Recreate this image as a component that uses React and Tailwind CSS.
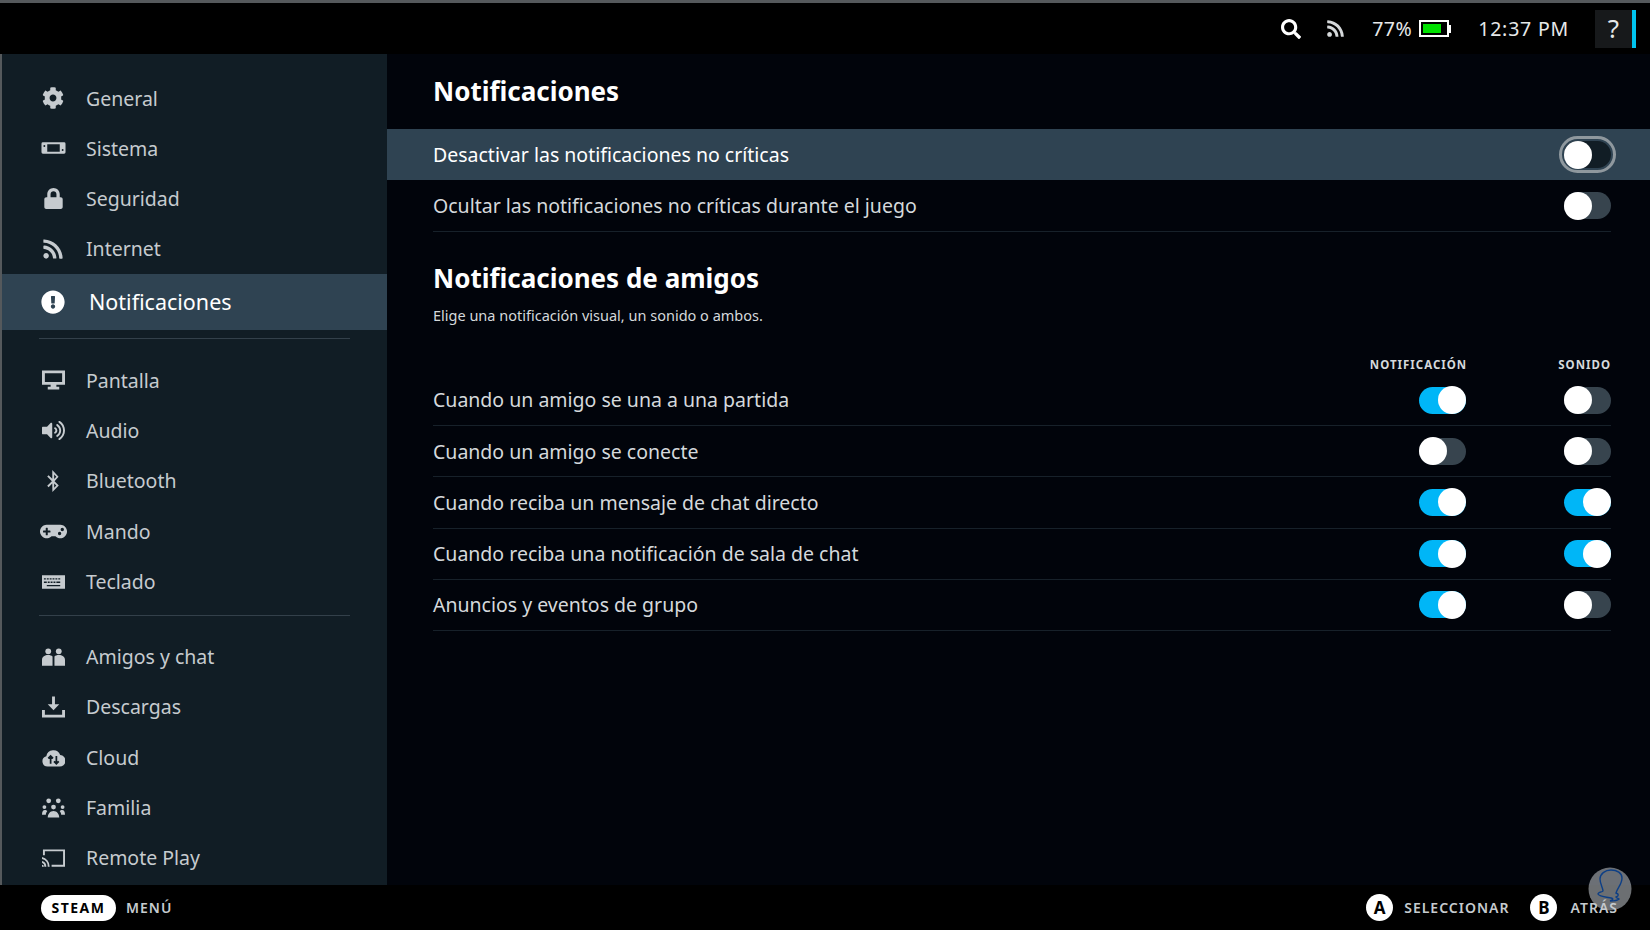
import React from 'react';
import { FaCog, FaLock, FaRss, FaExclamationCircle, FaVolumeUp, FaBluetoothB, FaGamepad, FaSearch } from 'react-icons/fa';

const DeckIcon = () => (
  <svg viewBox="0 0 26 14" className="w-[25px] h-[14px]" fill="currentColor">
    <path fillRule="evenodd" d="M2 1h22a1.500 1.500 0 0 1 1.500 1.500v9A1.500 1.500 0 0 1 24 13H2a1.500 1.500 0 0 1-1.500-1.500v-9A1.500 1.500 0 0 1 2 1zm4.500 2v8h13V3z" />
    <circle cx="3.500" cy="5" r="1" fill="#111d25" />
    <circle cx="22.500" cy="9" r="1" fill="#111d25" />
  </svg>
);

const MonitorIcon = () => (
  <svg viewBox="0 0 24 20" className="w-[23px] h-[20px]" fill="currentColor">
    <path fillRule="evenodd" d="M0 0h24v15H15v2h3v3H6v-3h3v-2H0zm3 3v9h18V3z" />
  </svg>
);

const KeyboardIcon = () => (
  <svg viewBox="0 0 24 14" className="w-[23px] h-[14px]" fill="currentColor">
    <path fillRule="evenodd" d="M0 0h24v14H0zM2 3v1.500h2V3zm3 0v1.500h2V3zm3 0v1.500h2V3zm3 0v1.500h2V3zm3 0v1.500h2V3zm3 0v1.500h2V3zm-15 3.500V8h3V6.500zm4 0V8h2V6.500zm3 0V8h2V6.500zm3 0V8h2V6.500zm3 0V8h4V6.500zM5 10v1.500h14V10z" />
  </svg>
);

const FriendsIcon = () => (
  <svg viewBox="0 0 24 20" className="w-[23px] h-[20px]" fill="currentColor">
    <circle cx="6.500" cy="4" r="3" />
    <circle cx="17.500" cy="4" r="3" />
    <path d="M0 19v-6c0-3 3-5 6.500-5 2 0 3.500.6 4.500 1.500V19zM13 19V9.500C14 8.600 15.500 8 17.500 8 21 8 24 10 24 13v6z" />
  </svg>
);

const DownloadIcon = () => (
  <svg viewBox="0 0 24 22" className="w-[23px] h-[22px]" fill="currentColor">
    <path d="M10.500 0h3v8H18l-6 6.500L6 8h4.500z" />
    <path d="M0 14h3v5h18v-5h3v8H0z" />
  </svg>
);

const CloudIcon = () => (
  <svg viewBox="0 0 24 20" className="w-[23px] h-[20px]">
    <path fill="currentColor" d="M6 20a5.500 5.500 0 0 1-1.500-10.800A7.500 7.500 0 0 1 19 8a6 6 0 0 1-1 12z" />
    <path fill="none" stroke="#111d25" strokeWidth="1.800" d="M9 17V9M6.500 11.500 9 9l2.500 2.500M15 9v8M12.500 14.500 15 17l2.500-2.500" />
  </svg>
);

const FamilyIcon = () => (
  <svg viewBox="0 0 24 20" className="w-[23px] h-[20px]" fill="currentColor">
    <circle cx="7" cy="2.500" r="2.500" />
    <circle cx="17" cy="2.500" r="2.500" />
    <circle cx="12" cy="9" r="2.500" />
    <circle cx="2.500" cy="9" r="2" />
    <circle cx="21.500" cy="9" r="2" />
    <path d="M6 20c0-4 2.500-7 6-7s6 3 6 7zM0 17c0-3 1-5 3-5 1 0 2 .4 2.500 1.200C4.700 14.400 4 15.700 4 17zM24 17c0-3-1-5-3-5-1 0-2 .4-2.500 1.200.8 1.200 1.500 2.500 1.500 3.800z" />
  </svg>
);

const CastIcon = () => (
  <svg viewBox="0 0 24 18" className="w-[23px] h-[18px]" fill="currentColor">
    <path d="M1 0h23v18H10v-2h12V2H3v4H1z" />
    <path d="M0 8a10 10 0 0 1 8 10H6a8 8 0 0 0-6-8zM0 12a6 6 0 0 1 4.500 6h-2A4 4 0 0 0 0 14zM0 16a2 2 0 0 1 2 2H0z" />
  </svg>
);

const groups = [
  [
    { label: 'General', icon: <FaCog size={22} /> },
    { label: 'Sistema', icon: <DeckIcon /> },
    { label: 'Seguridad', icon: <FaLock size={21} /> },
    { label: 'Internet', icon: <FaRss size={22} /> },
    { label: 'Notificaciones', icon: <FaExclamationCircle size={24} />, active: true },
  ],
  [
    { label: 'Pantalla', icon: <MonitorIcon /> },
    { label: 'Audio', icon: <FaVolumeUp size={23} /> },
    { label: 'Bluetooth', icon: <FaBluetoothB size={22} /> },
    { label: 'Mando', icon: <FaGamepad size={27} /> },
    { label: 'Teclado', icon: <KeyboardIcon /> },
  ],
  [
    { label: 'Amigos y chat', icon: <FriendsIcon /> },
    { label: 'Descargas', icon: <DownloadIcon /> },
    { label: 'Cloud', icon: <CloudIcon /> },
    { label: 'Familia', icon: <FamilyIcon /> },
    { label: 'Remote Play', icon: <CastIcon /> },
  ],
];

const friendRows = [
  { label: 'Cuando un amigo se una a una partida', notif: true, sound: false },
  { label: 'Cuando un amigo se conecte', notif: false, sound: false },
  { label: 'Cuando reciba un mensaje de chat directo', notif: true, sound: true },
  { label: 'Cuando reciba una notificación de sala de chat', notif: true, sound: true },
  { label: 'Anuncios y eventos de grupo', notif: true, sound: false },
];

const Toggle = ({ on, focused }) => (
  <div
    className={`relative w-[47px] h-[27px] rounded-full ${on ? 'bg-[#00b6f7]' : focused ? 'bg-[#111d25]' : 'bg-[#37444e]'} ${
      focused ? 'outline-[3px] outline-offset-[2px] outline-[#8f989e]' : ''
    }`}
  >
    <div className={`absolute top-[-0.500px] w-[28px] h-[28px] rounded-full bg-white ${on ? 'right-0' : 'left-0'}`} />
  </div>
);

const SidebarItem = ({ item }) => (
  <div
    className={`flex items-center ${
      item.active ? 'h-[56px] bg-[#2f4352] text-white text-[21.500px]' : 'h-[50.300px] text-[#c6cbcf] text-[19.500px]'
    }`}
  >
    <div className="w-[32px] ml-[35px] flex justify-center shrink-0">{item.icon}</div>
    <span className={item.active ? 'ml-[20px]' : 'ml-[17px]'}>{item.label}</span>
  </div>
);

export default function App() {
  return (
    <div className="w-[1650px] h-[930px] flex flex-col bg-black overflow-hidden relative text-white font-['Noto_Sans',sans-serif]">
      <div className="h-[3px] bg-[#55595c]" />
      {/* top bar */}
      <div className="h-[51px] flex items-center justify-end text-[#e6e8e9]">
        <FaSearch size={20} className="text-white" />
        <FaRss size={19} className="ml-[25px] text-[#d5d8da]" />
        <span className="ml-[27px] text-[19.500px] tracking-[0.500px]">77%</span>
        <div className="ml-[7px] flex items-center">
          <div className="w-[30px] h-[17px] border-2 border-white p-[2px]">
            <div className="w-[18px] h-full bg-[#00e000]" />
          </div>
          <div className="w-[2px] h-[8px] bg-white" />
        </div>
        <span className="ml-[27px] text-[19.500px] tracking-[0.800px]">12:37 PM</span>
        <div className="ml-[26px] w-[37px] h-[38px] bg-[#17191b] flex items-center justify-center text-[26px]">?</div>
        <div className="w-[4px] h-[38px] bg-[#00c4f0] mr-[14px]" />
      </div>

      <div className="flex-1 flex min-h-0">
        {/* sidebar */}
        <div className="w-[387px] shrink-0 border-l-2 border-[#55595c] bg-[#111d25] flex flex-col pt-[19px]">
          {groups.map((group, i) => (
            <div key={i}>
              {group.map((item) => (
                <SidebarItem key={item.label} item={item} />
              ))}
              {i < groups.length - 1 && <div className="h-px bg-[#33404a] mx-[37px] mt-[8px] mb-[16px]" />}
            </div>
          ))}
        </div>

        {/* main */}
        <div className="flex-1 bg-[#01040b] flex flex-col">
          <h1 className="pl-[46px] h-[75px] flex items-center text-[26px] font-bold">Notificaciones</h1>
          <div className="h-[51px] pl-[46px] pr-[39px] flex items-center justify-between bg-[#2f4352] text-[19.500px]">
            <span>Desactivar las notificaciones no críticas</span>
            <Toggle focused />
          </div>
          <div className="ml-[46px] mr-[39px] h-[52px] flex items-center justify-between border-b border-[#17212a] text-[19.500px] text-[#d5d9dc]">
            <span>Ocultar las notificaciones no críticas durante el juego</span>
            <Toggle />
          </div>
          <div className="px-[46px] mt-[28px]">
            <h2 className="text-[26px] font-bold leading-[36px]">Notificaciones de amigos</h2>
            <p className="mt-[9px] text-[14.500px] leading-[20px] text-[#d5d9dc]">Elige una notificación visual, un sonido o ambos.</p>
          </div>
          <div className="ml-[46px] mr-[39px] mt-[30px] flex justify-end text-[11.500px] font-bold tracking-[1px] text-[#d5d9dc] h-[20px] items-center">
            <span className="mr-[91px]">NOTIFICACIÓN</span>
            <span>SONIDO</span>
          </div>
          <div className="ml-[46px] mr-[39px]">
            {friendRows.map((row) => (
              <div key={row.label} className="h-[51.200px] flex items-center border-b border-[#17212a] text-[19.500px] text-[#d5d9dc]">
                <span className="flex-1">{row.label}</span>
                <Toggle on={row.notif} />
                <div className="ml-[98px]">
                  <Toggle on={row.sound} />
                </div>
              </div>
            ))}
          </div>
        </div>
      </div>

      {/* bottom bar */}
      <div className="h-[45px] shrink-0 flex items-center pl-[39px] pr-[32px] border-l-2 border-black">
        <div className="w-[75px] h-[26px] rounded-full bg-white text-black text-[14px] font-bold tracking-[1.500px] flex items-center justify-center">STEAM</div>
        <span className="ml-[10px] text-[14px] font-semibold tracking-[1px] text-[#c6cbcf]">MENÚ</span>
        <div className="ml-auto w-[27px] h-[27px] rounded-full bg-white text-black text-[17px] font-bold flex items-center justify-center">A</div>
        <span className="ml-[11px] text-[14px] font-semibold tracking-[1px] text-[#c6cbcf]">SELECCIONAR</span>
        <div className="ml-[21px] w-[27px] h-[27px] rounded-full bg-white text-black text-[17px] font-bold flex items-center justify-center">B</div>
        <span className="ml-[13px] text-[14px] font-semibold tracking-[1px] text-[#c6cbcf]">ATRÁS</span>
      </div>

      {/* watermark */}
      <svg viewBox="0 0 44 44" className="absolute left-[1588px] top-[867px] w-[44px] h-[44px]">
        <circle cx="22" cy="22" r="21.500" fill="#c4cbd0" fillOpacity="0.55" />
        <path d="M23 3c-6 0-11 4-11 9 0 5 3 9 3 12 0 1-5 1-5 3 0 2 8 3 13 4 3 .6 2 2 -1 3 3 0 7 0 9-2-1-1-3-1-3-2 3-1 3-3 0-4 2-6 6-9 6-15 0-5-5-8-11-8z" fill="none" stroke="#0d3f86" strokeWidth="1.400" />
      </svg>
    </div>
  );
}
